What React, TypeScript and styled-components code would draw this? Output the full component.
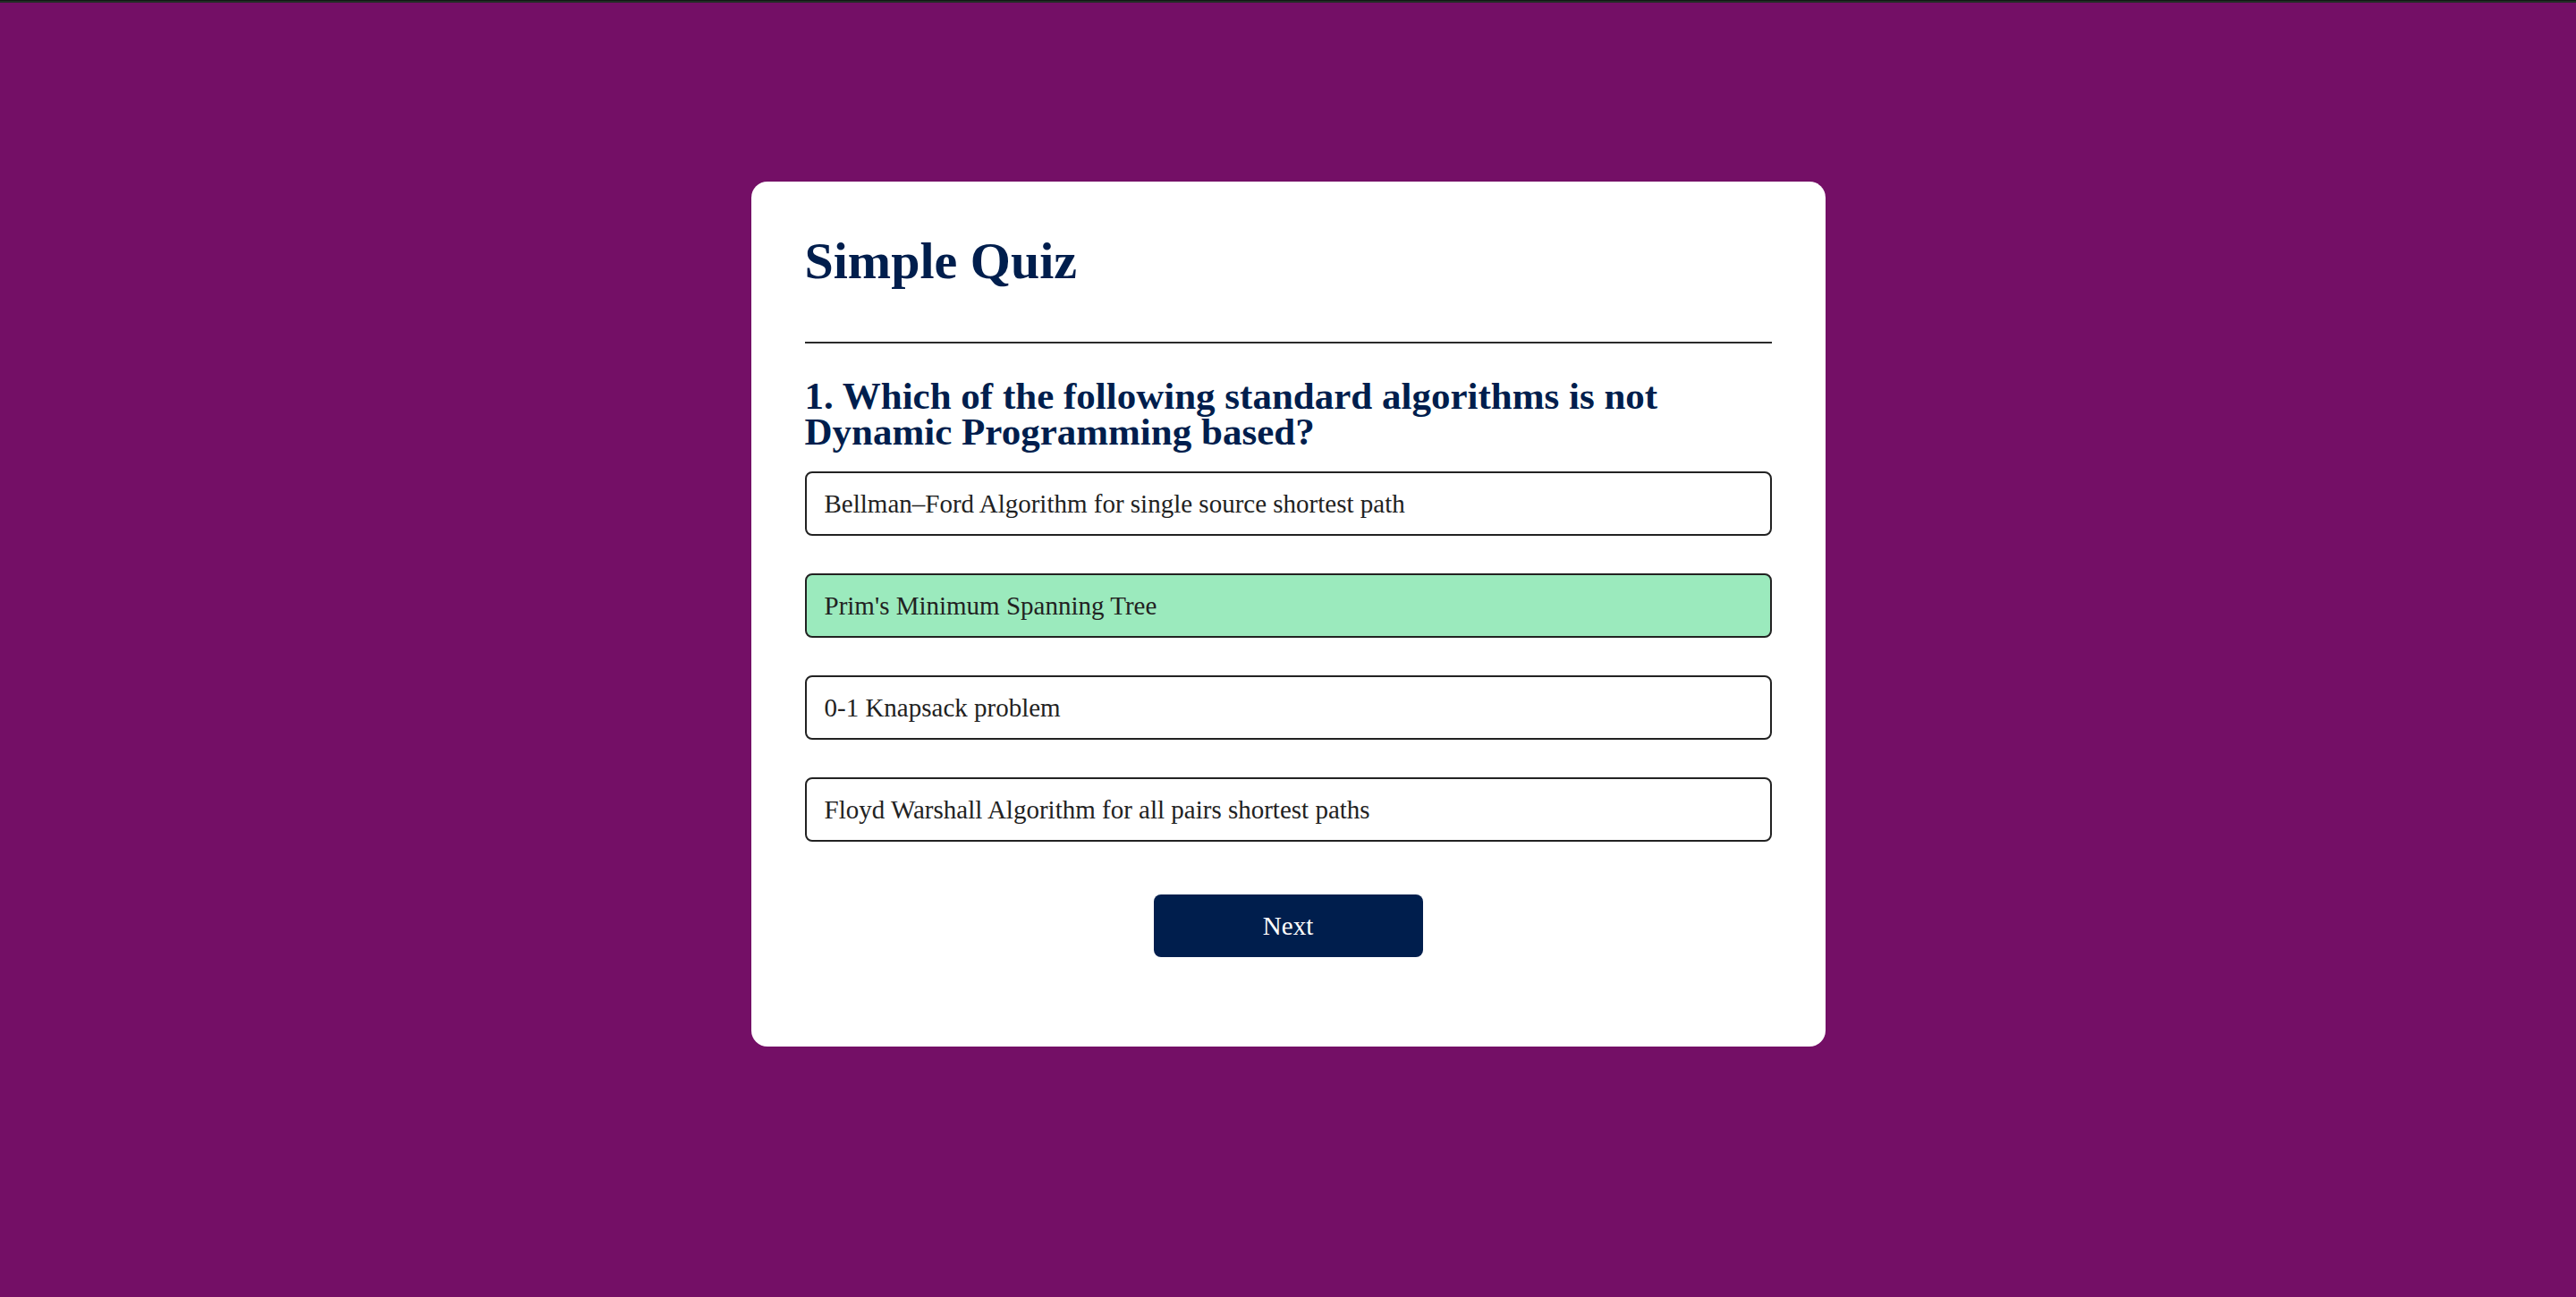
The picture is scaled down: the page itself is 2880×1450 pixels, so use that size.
import React, { useState } from "react";
import styled, { createGlobalStyle } from "styled-components";

const Colors = {
  page: "#740f66",
  navy: "#001e4d",
  text: "#222222",
  border: "#222222",
  rule: "#2b2b2b",
  picked: "#9beabd",
  surface: "#ffffff",
};

const GlobalStyle = createGlobalStyle`
  html, body {
    margin: 0;
    padding: 0;
    background: ${Colors.page};
  }
  * {
    box-sizing: border-box;
  }
`;

const Page = styled.div`
  min-height: 100vh;
  background: ${Colors.page};
  font-family: "Liberation Serif", "Times New Roman", serif;
`;

const BrowserStrip = styled.div`
  height: 3px;
  background: #131715;
  border-bottom: 2px solid #222d25;
`;

const Stage = styled.main`
  display: flex;
  justify-content: center;
  padding-top: 200px;
`;

const Card = styled.section`
  width: 1201px;
  background: ${Colors.surface};
  border-radius: 18px;
  padding: 60px 60px 100px 60px;
  display: flex;
  flex-direction: column;
`;

const Title = styled.h1`
  margin: 0;
  color: ${Colors.navy};
  font-size: 58px;
  line-height: 1;
  font-weight: 700;
`;

const Rule = styled.hr`
  margin: 61px 0 0 0;
  border: none;
  border-top: 2px solid ${Colors.rule};
  width: 100%;
`;

const Question = styled.h2`
  margin: 39px 0 24px 0;
  color: ${Colors.navy};
  font-size: 43px;
  line-height: 40px;
  font-weight: 700;
`;

const Options = styled.ul`
  list-style: none;
  margin: 0;
  padding: 0;
  display: flex;
  flex-direction: column;
  gap: 42px;
`;

const Option = styled.li<{ $picked: boolean }>`
  height: 72px;
  display: flex;
  align-items: center;
  padding: 0 20px;
  border: 2px solid ${Colors.border};
  border-radius: 8px;
  background: ${(p) => (p.$picked ? Colors.picked : Colors.surface)};
  color: ${Colors.text};
  font-size: 29px;
  cursor: pointer;
`;

const Footer = styled.div`
  display: flex;
  justify-content: center;
  margin-top: 59px;
`;

const NextButton = styled.button`
  width: 301px;
  height: 70px;
  border: none;
  border-radius: 8px;
  background: ${Colors.navy};
  color: #ffffff;
  font-family: "Liberation Serif", "Times New Roman", serif;
  font-size: 29px;
  cursor: pointer;
`;

const answers = [
  "Bellman–Ford Algorithm for single source shortest path",
  "Prim's Minimum Spanning Tree",
  "0-1 Knapsack problem",
  "Floyd Warshall Algorithm for all pairs shortest paths",
];

const App: React.FC = () => {
  const [picked, setPicked] = useState(1);

  return (
    <Page>
      <GlobalStyle />
      <BrowserStrip />
      <Stage>
        <Card>
          <Title>Simple Quiz</Title>
          <Rule />
          <Question>
            1. Which of the following standard algorithms is not Dynamic
            Programming based?
          </Question>
          <Options>
            {answers.map((a, i) => (
              <Option key={a} $picked={picked === i} onClick={() => setPicked(i)}>
                {a}
              </Option>
            ))}
          </Options>
          <Footer>
            <NextButton>Next</NextButton>
          </Footer>
        </Card>
      </Stage>
    </Page>
  );
};

export default App;
